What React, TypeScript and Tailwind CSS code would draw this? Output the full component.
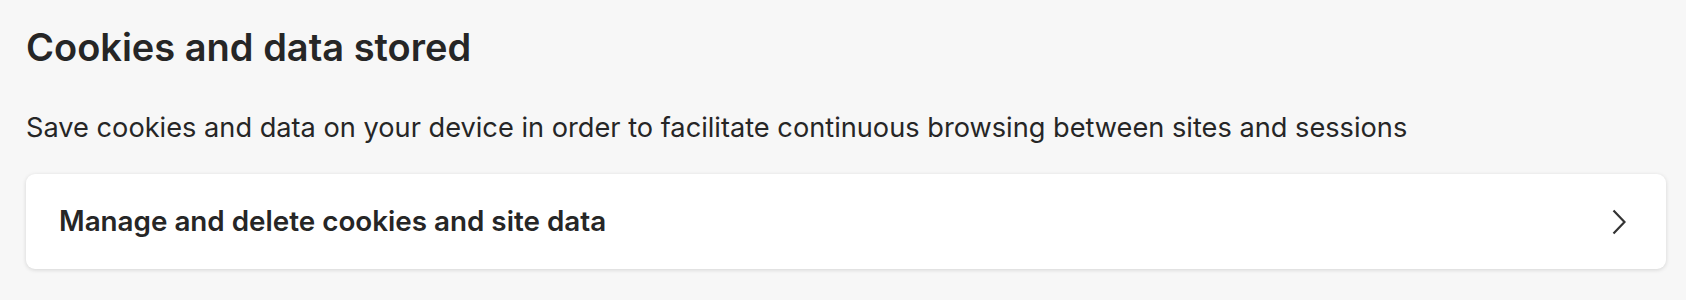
export default function App() {
  return (
    <div
      className="min-h-screen w-full bg-[#f7f7f7] text-[#262626] px-[26px] pt-[21px]"
      style={{ fontFamily: "Inter, 'Noto Sans', sans-serif" }}
    >
      <h1 className="text-[38px] leading-[52px] font-semibold">
        Cookies and data stored
      </h1>

      <p className="mt-[37px] text-[27.2px] leading-[36px]">
        Save cookies and data on your device in order to facilitate continuous browsing between sites and sessions
      </p>

      <div className="mt-[28px] w-[1640px] h-[95px] bg-white rounded-[9px] shadow-[0_1px_4px_rgba(0,0,0,0.14)] flex items-center justify-between pl-[33px] pr-[40px]">
        <span className="text-[27.8px] font-semibold">Manage and delete cookies and site data</span>
        <svg width="14" height="26" viewBox="0 0 14 26" fill="none" className="text-[#333]">
          <path d="M1.5 1.5 L12.5 13 L1.5 24.5" stroke="currentColor" strokeWidth="2.2" />
        </svg>
      </div>
    </div>
  );
}
